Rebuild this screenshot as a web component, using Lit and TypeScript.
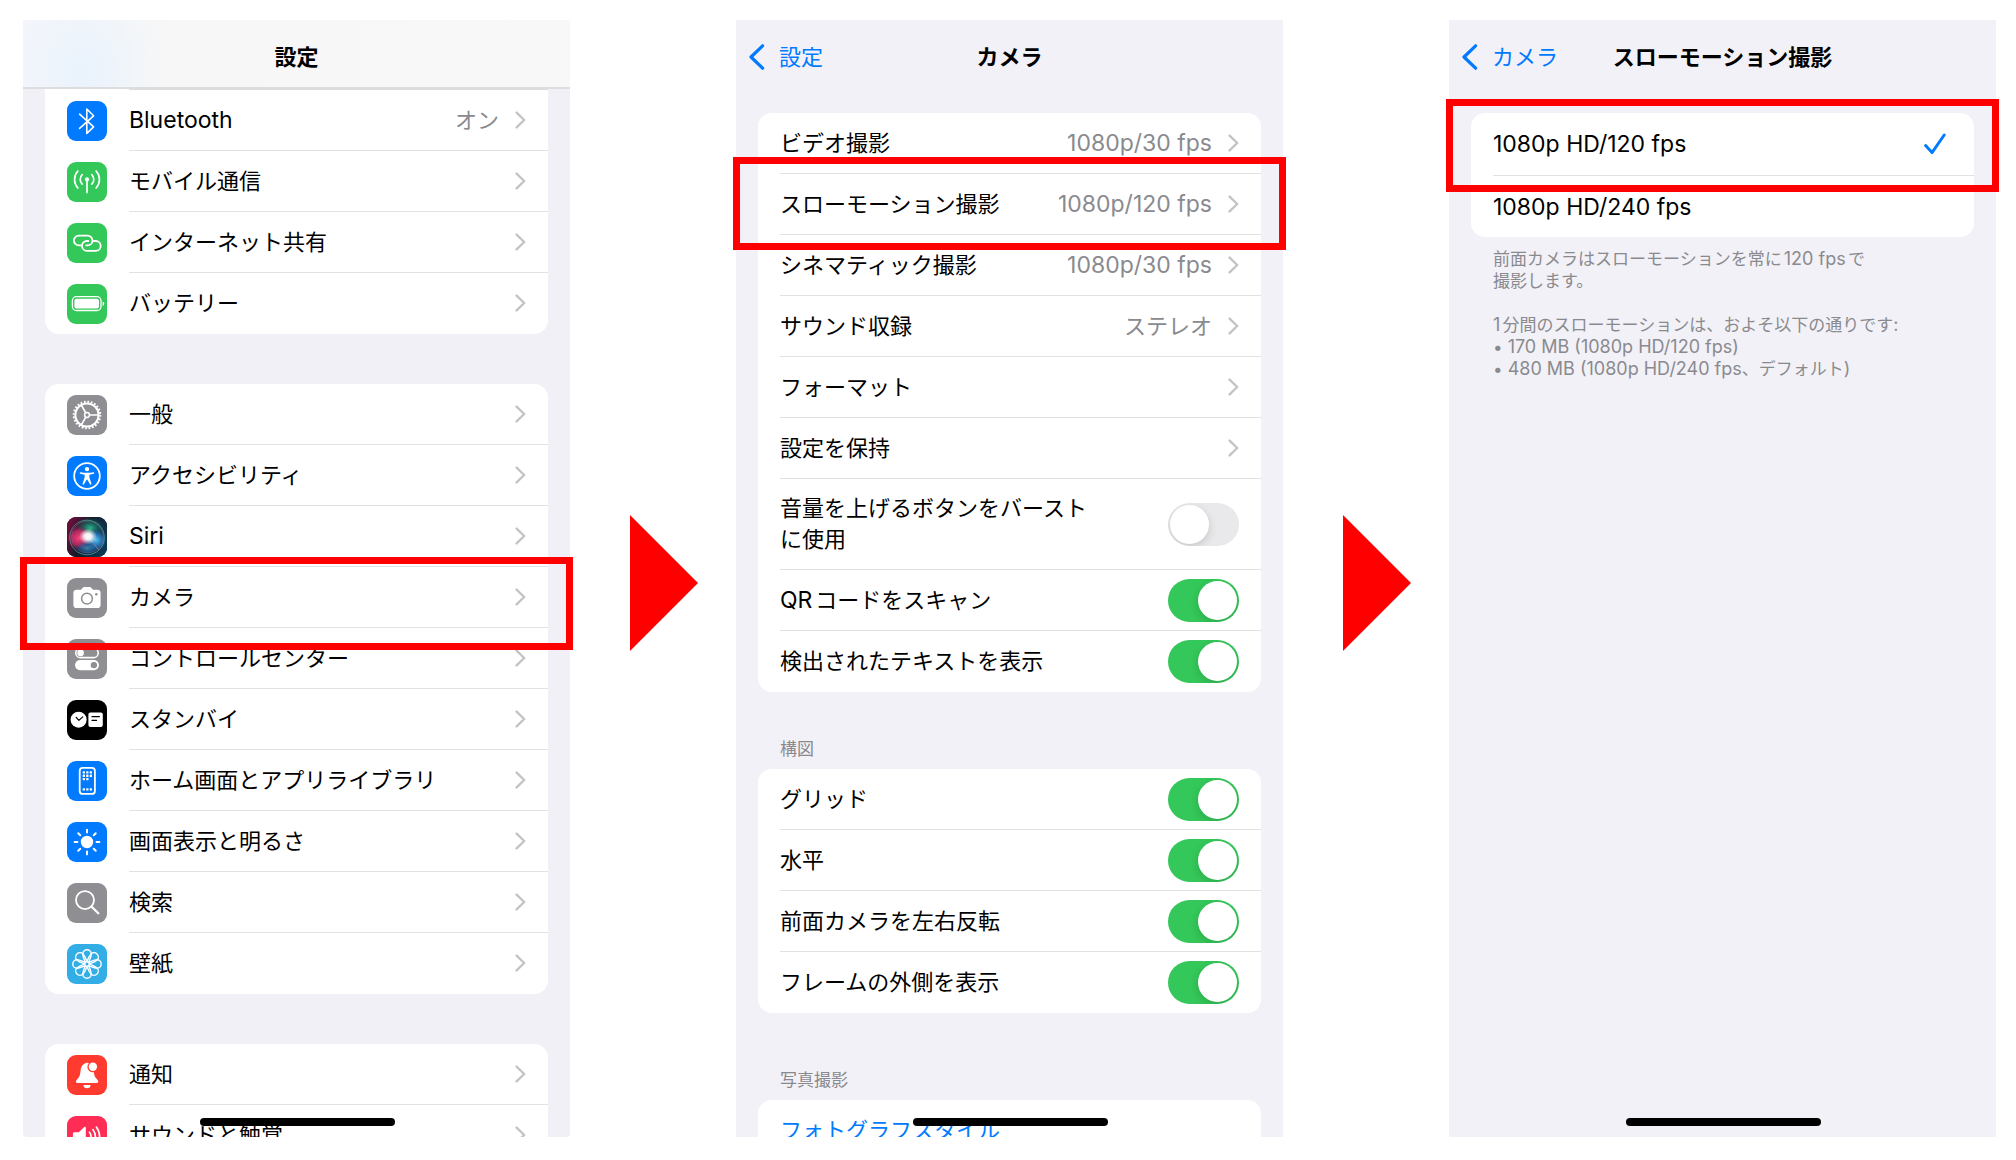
import { LitElement, html, svg, css, nothing, TemplateResult, SVGTemplateResult } from "lit";
import { customElement, property } from "lit/decorators.js";
import { classMap } from "lit/directives/class-map.js";

const shared = css`
  :host {
    display: block;
    box-sizing: border-box;
  }
  *,
  *::before,
  *::after {
    box-sizing: border-box;
  }
  .latin {
    font-size: 23px;
  }
  .small .latin {
    font-size: 18px;
  }
`;

/** Wraps runs of Latin letters and digits so they sit optically level with kana and kanji. */
const mixed = (text: string): unknown[] =>
  text
    .split(/([\x20-\x7e]+)/)
    .filter((part) => part !== "")
    .map((part) => (/^[\x20-\x7e]+$/.test(part) ? html`<span class="latin">${part}</span>` : part));

const range = (n: number): number[] => Array.from({ length: n }, (_, i) => i);

interface IconDef {
  background: string;
  glyph: SVGTemplateResult;
}

const line = "fill:none;stroke:#fff;stroke-linecap:round;stroke-linejoin:round";

const ICONS: Record<string, IconDef> = {
  bluetooth: {
    background: "#007aff",
    glyph: svg`<path style=${line} stroke-width="1.6" d="M12.6 13.2 26.6 25.9 19.8 32.4V8l6.8 6.8L12.6 27.4"/>`,
  },
  cellular: {
    background: "#34c759",
    glyph: svg`<g style=${line} stroke-width="1.7">
      <path d="M20 18v12.6M15.2 12.6a6.8 6.8 0 0 0 0 9.6M24.8 12.6a6.8 6.8 0 0 1 0 9.6M10.9 9a12.5 12.5 0 0 0 0 17M29.1 9a12.5 12.5 0 0 1 0 17"/>
    </g><circle cx="20" cy="17.4" r="2.1" fill="#fff"/>`,
  },
  hotspot: {
    background: "#34c759",
    glyph: svg`<g style=${line} stroke-width="1.8">
      <path d="M13.6 22.4h-1.8a4.9 4.9 0 0 1 0-9.8h8.8a4.9 4.9 0 0 1 0 9.8h-1.4"/>
      <path d="M26.8 18h2a4.9 4.9 0 0 1 0 9.8h-8.9a4.9 4.9 0 0 1 0-9.8h1.4"/>
    </g>`,
  },
  battery: {
    background: "#34c759",
    glyph: svg`<rect x="5.4" y="12.7" width="28.6" height="13.8" rx="4" fill="none" stroke="#fff" stroke-width="1.3"/>
      <rect x="7.4" y="14.7" width="24.6" height="9.8" rx="2.2" fill="#fff"/>
      <path d="M35.6 17.4a2.4 2.4 0 0 1 0 4.6z" fill="#fff"/>`,
  },
  general: {
    background: "#8e8e93",
    glyph: svg`<g fill="none" stroke="#fff">
      <circle cx="20" cy="20" r="13.3" stroke-width="2" stroke-dasharray="1.74 1.74"/>
      <circle cx="20" cy="20" r="11.6" stroke-width="2"/>
      <circle cx="20" cy="20" r="2.4" stroke-width="1.5"/>
      <path stroke-width="1.7" d="M22.4 20h9.2M18.8 17.9l-4.6-8M18.8 22.1l-4.6 8"/>
    </g>`,
  },
  accessibility: {
    background: "#007aff",
    glyph: svg`<circle cx="20" cy="20" r="12.8" fill="none" stroke="#fff" stroke-width="1.8"/>
      <circle cx="20" cy="13.1" r="2.2" fill="#fff"/>
      <path fill="#fff" d="M13.6 16.2c2.2.4 4.2.6 6.4.6s4.2-.2 6.4-.6c1.1-.1 1.3 1.3.2 1.6l-4.1.9c-.3.9-.2 2.5.2 3.7l1.7 5.2c.3 1.1-1.1 1.5-1.5.5L20.2 23.500h-.4L17.1 28.1c-.5 1-1.8.6-1.5-.5l1.700-5.200c.4-1.200.5-2.800.2-3.700l-4.100-.9c-1.100-.3-.9-1.700.2-1.600z"/>`,
  },
  siri: {
    background: "#0d1220",
    glyph: svg`<defs>
        <linearGradient id="siriBase" x1="0" y1="0.3" x2="1" y2="0.7">
          <stop offset="0" stop-color="#6a0f3a"/><stop offset="0.42" stop-color="#16192a"/><stop offset="1" stop-color="#0b3a56"/>
        </linearGradient>
        <radialGradient id="siriGreen"><stop offset="0" stop-color="#2bb58e"/><stop offset="1" stop-color="#13705f" stop-opacity="0"/></radialGradient>
        <radialGradient id="siriPink"><stop offset="0" stop-color="#f5447c"/><stop offset="0.6" stop-color="#c52a63" stop-opacity="0.85"/><stop offset="1" stop-color="#8b1950" stop-opacity="0"/></radialGradient>
        <radialGradient id="siriBlue"><stop offset="0" stop-color="#54c4f5"/><stop offset="0.6" stop-color="#2271b8" stop-opacity="0.8"/><stop offset="1" stop-color="#1a4e90" stop-opacity="0"/></radialGradient>
        <radialGradient id="siriCore"><stop offset="0" stop-color="#fff"/><stop offset="0.4" stop-color="#fff" stop-opacity="0.9"/><stop offset="1" stop-color="#fff" stop-opacity="0"/></radialGradient>
      </defs>
      <rect width="40" height="40" fill="url(#siriBase)"/>
      <ellipse cx="23" cy="11" rx="15" ry="11" fill="url(#siriGreen)"/>
      <circle cx="12" cy="21" r="12" fill="url(#siriPink)"/>
      <circle cx="29" cy="23" r="11" fill="url(#siriBlue)"/>
      <ellipse cx="20" cy="31" rx="12" ry="7" fill="url(#siriBlue)" opacity="0.6"/>
      <circle cx="20" cy="20.5" r="17.3" fill="none" stroke="#57b9a8" stroke-opacity="0.7" stroke-width="0.9"/>
      <circle cx="20.5" cy="20" r="15.9" fill="none" stroke="#a980b4" stroke-opacity="0.45" stroke-width="0.7"/>
      <path d="M21 20l11 13" stroke="#c89a86" stroke-opacity="0.6" stroke-width="1"/>
      <ellipse cx="21" cy="19.5" rx="9" ry="8" fill="url(#siriCore)"/>`,
  },
  camera: {
    background: "#8e8e93",
    glyph: svg`<path fill="#fff" d="M9.6 11.8h3.6c.8 0 1.2-.3 1.7-1l.6-.8c.5-.6 1-.9 1.8-.9h5.4c.8 0 1.3.3 1.8.9l.6.8c.5.7.9 1 1.7 1h3.6c2 0 3.2 1.1 3.2 3.1V27c0 2-1.2 3.1-3.2 3.1H9.6c-2 0-3.2-1.1-3.2-3.1V14.9c0-2 1.2-3.1 3.2-3.1z"/>
      <circle cx="20" cy="20.6" r="5.4" fill="none" stroke="#8e8e93" stroke-width="1.5"/>
      <circle cx="29.3" cy="16.2" r="1.2" fill="#8e8e93"/>`,
  },
  control: {
    background: "#8e8e93",
    glyph: svg`<rect x="8.8" y="9.2" width="22.4" height="9.4" rx="4.7" fill="none" stroke="#fff" stroke-width="1.6"/>
      <circle cx="13.6" cy="13.9" r="3.3" fill="#fff"/>
      <rect x="8" y="21" width="24" height="10.2" rx="5.1" fill="#fff"/>
      <circle cx="26.9" cy="26.1" r="3.2" fill="#8e8e93"/>`,
  },
  standby: {
    background: "#000000",
    glyph: svg`<circle cx="11.6" cy="19.7" r="8" fill="#fff"/>
      <path d="M9.2 17.4l2.7 3 3.8-3.5" fill="none" stroke="#000" stroke-width="1.2" stroke-linecap="round" stroke-linejoin="round"/>
      <rect x="21.4" y="12.4" width="14.4" height="14.6" rx="2" fill="#fff"/>
      <path d="M25 16.7h7.4M25 20.3h4.6" stroke="#000" stroke-width="1.2" stroke-linecap="round"/>`,
  },
  home: {
    background: "#007aff",
    glyph: svg`<rect x="12.7" y="6.9" width="15.2" height="26" rx="3" fill="none" stroke="#fff" stroke-width="1.8"/>
      ${[
        [0, 0], [1, 0], [2, 0], [0, 1], [1, 1], [2, 1], [0, 2], [1, 2], [0, 5], [1, 5], [2, 5],
      ].map(
        ([cx, cy]) =>
          svg`<rect x=${15.7 + cx * 3.5} y=${10.2 + cy * 3.4} width="2.3" height="2.3" rx="0.5" fill="#fff"/>`
      )}`,
  },
  display: {
    background: "#007aff",
    glyph: svg`<circle cx="20" cy="20" r="6.2" fill="#fff"/>
      ${range(8).map(
        (i) =>
          svg`<path d="M20 7.6v2.9" transform="rotate(${i * 45} 20 20)" stroke="#fff" stroke-width="1.9" stroke-linecap="round"/>`
      )}`,
  },
  search: {
    background: "#8e8e93",
    glyph: svg`<circle cx="18" cy="17.1" r="9" fill="none" stroke="#fff" stroke-width="1.8"/>
      <path d="M24.6 23.7l6.7 6.6" stroke="#fff" stroke-width="2.3" stroke-linecap="round"/>`,
  },
  wallpaper: {
    background: "#32ade6",
    glyph: svg`<g fill="none" stroke="#fff" stroke-width="1.4">
      ${range(8).map(
        (i) =>
          svg`<path transform="rotate(${i * 45} 20 20)" d="M21.8 18.2c.8-2.6 2.4-4.900 2.400-8.200a4.200 4.200 0 0 0-8.400 0c0 3.300 1.600 5.600 2.400 8.200"/>`
      )}
      <circle cx="20" cy="20" r="2.2"/></g>`,
  },
  notifications: {
    background: "#ff3b30",
    glyph: svg`<path fill="#fff" d="M20 7.7c-3.9.6-6 3.7-6.4 7.7-.4 4.3-1.1 6.5-3.2 8.7-.8.9-1.4 1.7-1.4 2.5 0 1 .7 1.5 1.9 1.5h18.4c1.2 0 1.9-.5 1.9-1.5 0-.8-.6-1.6-1.4-2.5-2.1-2.2-2.8-4.4-3.2-8.7-.4-4-2.5-7.1-6.6-7.700z"/>
      <circle cx="25.9" cy="11.8" r="5.5" fill="#ff3b30"/>
      <circle cx="25.9" cy="11.8" r="4.2" fill="#fff"/>
      <path d="M16.5 30.1h7a3.5 3.2 0 0 1-7 0z" fill="#fff"/>`,
  },
  sounds: {
    background: "#ff2d55",
    glyph: svg`<path fill="#fff" d="M7.5 16.2h4.3l5.2-5c.8-.7 1.8-.3 1.8.8v17c0 1.1-1 1.5-1.8.8l-5.2-5H7.5c-1 0-1.6-.6-1.6-1.6v-5.400c0-1 .6-1.600 1.600-1.600z"/>
      <path style=${line} stroke-width="1.7" d="M22.5 16.3a7 7 0 0 1 0 8.4M26 13.7a11 11 0 0 1 0 13.6M29.5 11.2a15.5 15.5 0 0 1 0 18.6"/>`,
  },
};

const chevron = html`<svg class="chevron" viewBox="0 0 11 18" width="11" height="18" aria-hidden="true">
  <path d="M1.6 1.6 9.2 9l-7.6 7.4" fill="none" stroke="#c4c4c7" stroke-width="2.4" stroke-linecap="round" stroke-linejoin="round"/>
</svg>`;

@customElement("setting-row")
export class SettingRow extends LitElement {
  @property() icon = "";
  @property() label = "";
  @property() value = "";
  @property({ type: Boolean }) last = false;

  static styles = [
    shared,
    css`
      .row {
        display: flex;
        align-items: stretch;
        gap: 22px;
        min-height: 61px;
        padding-left: 22px;
        color: inherit;
        text-decoration: none;
      }
      .icon {
        align-self: center;
        flex: none;
        width: 40px;
        height: 40px;
        border-radius: 9px;
      }
      .body {
        flex: 1;
        display: flex;
        align-items: center;
        gap: 16px;
        padding-right: 22px;
        border-bottom: 1px solid #e2e2e5;
        line-height: 30px;
      }
      .last {
        border-bottom-color: transparent;
      }
      .label {
        flex: 1;
      }
      .value {
        color: #8a8a8e;
      }
      .chevron {
        flex: none;
      }
    `,
  ];

  render() {
    const icon = ICONS[this.icon];
    return html`<a class="row" href="#${this.icon || "detail"}">
      ${icon
        ? html`<svg class="icon" viewBox="0 0 40 40" aria-hidden="true">
            <rect width="40" height="40" fill=${icon.background}/>${icon.glyph}
          </svg>`
        : nothing}
      <span class=${classMap({ body: true, last: this.last })}>
        <span class="label">${mixed(this.label)}</span>
        ${this.value ? html`<span class="value">${mixed(this.value)}</span>` : nothing} ${chevron}
      </span>
    </a>`;
  }
}

@customElement("switch-row")
export class SwitchRow extends LitElement {
  @property({ attribute: false }) lines: string[] = [];
  @property({ type: Boolean }) on = false;
  @property({ type: Boolean }) last = false;

  static styles = [
    shared,
    css`
      .row {
        display: flex;
        padding-left: 22px;
      }
      .body {
        flex: 1;
        display: flex;
        align-items: center;
        justify-content: space-between;
        min-height: 61px;
        padding: 14px 22px 14px 0;
        border-bottom: 1px solid #e2e2e5;
      }
      .single {
        padding-top: 0;
        padding-bottom: 0;
      }
      .last {
        border-bottom-color: transparent;
      }
      .text {
        line-height: 31px;
      }
      .switch {
        appearance: none;
        flex: none;
        display: flex;
        overflow: hidden;
        width: 71px;
        height: 43px;
        margin: 0;
        padding: 2px;
        border-radius: 22px;
        background: #e9e9eb;
      }
      .switch::before {
        content: "";
        width: 39px;
        height: 39px;
        border-radius: 50%;
        background: #fff;
        box-shadow: 0 3px 8px rgba(0, 0, 0, 0.15);
      }
      .switch:checked {
        justify-content: flex-end;
        background: #34c759;
      }
    `,
  ];

  render() {
    return html`<div class="row">
      <div class=${classMap({ body: true, single: this.lines.length === 1, last: this.last })}>
        <label class="text" for="toggle"
          >${this.lines.map((text, i) => html`${i ? html`<br />` : nothing}${mixed(text)}`)}</label
        >
        <input class="switch" id="toggle" type="checkbox" role="switch" .checked=${this.on} />
      </div>
    </div>`;
  }
}

@customElement("phone-screen")
export class PhoneScreen extends LitElement {
  @property() heading = "";
  @property() back = "";
  @property({ type: Boolean }) frosted = false;

  static styles = [
    shared,
    css`
      :host {
        min-width: 0;
        min-height: 0;
        position: relative;
      }
      .screen {
        height: 100%;
        display: flex;
        flex-direction: column;
        overflow: hidden;
        background: #f2f1f7;
      }
      .scrolled {
        background: #f1f0f6;
        border-radius: 0 0 4px 4px;
      }
      .bar {
        flex: none;
        display: grid;
        grid-template-columns: 1fr auto 1fr;
        align-items: center;
        height: 93px;
        padding: 0 13px 19px;
      }
      .frosted {
        height: 69px;
        padding-bottom: 0;
        padding-top: 6px;
        border-bottom: 2px solid #dddddf;
        background: radial-gradient(ellipse 80px 100px at 60px 50px, #e9f2fc, rgba(233, 242, 252, 0)),
          linear-gradient(90deg, #f5f6fa, #f7f7f7 30%, #f8f8f8);
      }
      .title {
        grid-column: 2;
        margin: 0;
        font-size: 22px;
        font-weight: 600;
        line-height: 30px;
      }
      .back {
        grid-column: 1;
        justify-self: start;
        display: flex;
        align-items: center;
        gap: 14px;
        color: #007aff;
        text-decoration: none;
        line-height: 30px;
      }
      .content {
        flex: 1;
        min-height: 0;
        padding: 0 22px;
      }
      .indicator {
        position: absolute;
        left: 50%;
        bottom: 11px;
        width: 195px;
        height: 8px;
        margin-left: -97px;
        border-radius: 4px;
        background: #000;
      }
    `,
  ];

  render() {
    return html`<div class=${classMap({ screen: true, scrolled: this.frosted })}>
        <header class=${classMap({ bar: true, frosted: this.frosted })}>
          ${this.back
            ? html`<a class="back" href="#back">
                <svg viewBox="0 0 16 26" width="16" height="26" aria-hidden="true">
                  <path d="M13.6 1.8 2 13l11.6 11.2" fill="none" stroke="#007aff" stroke-width="3.2" stroke-linecap="round" stroke-linejoin="round"/>
                </svg>
                <span>${this.back}</span>
              </a>`
            : nothing}
          <h2 class="title">${this.heading}</h2>
        </header>
        <div class="content"><slot></slot></div>
      </div>
      <div class="indicator"></div>
      <slot name="mark"></slot>`;
  }
}

interface Item {
  icon?: string;
  label: string;
  value?: string;
}

const CONNECTIVITY: Item[] = [
  { icon: "bluetooth", label: "Bluetooth", value: "オン" },
  { icon: "cellular", label: "モバイル通信" },
  { icon: "hotspot", label: "インターネット共有" },
  { icon: "battery", label: "バッテリー" },
];

const DEVICE: Item[] = [
  { icon: "general", label: "一般" },
  { icon: "accessibility", label: "アクセシビリティ" },
  { icon: "siri", label: "Siri" },
  { icon: "camera", label: "カメラ" },
  { icon: "control", label: "コントロールセンター" },
  { icon: "standby", label: "スタンバイ" },
  { icon: "home", label: "ホーム画面とアプリライブラリ" },
  { icon: "display", label: "画面表示と明るさ" },
  { icon: "search", label: "検索" },
  { icon: "wallpaper", label: "壁紙" },
];

const ALERTS: Item[] = [
  { icon: "notifications", label: "通知" },
  { icon: "sounds", label: "サウンドと触覚" },
];

const CAPTURE: Item[] = [
  { label: "ビデオ撮影", value: "1080p/30 fps" },
  { label: "スローモーション撮影", value: "1080p/120 fps" },
  { label: "シネマティック撮影", value: "1080p/30 fps" },
  { label: "サウンド収録", value: "ステレオ" },
  { label: "フォーマット" },
  { label: "設定を保持" },
];

const COMPOSITION = ["グリッド", "水平", "前面カメラを左右反転", "フレームの外側を表示"];

const RATES = ["1080p HD/120 fps", "1080p HD/240 fps"];

@customElement("app-root")
export class AppRoot extends LitElement {
  static styles = [
    shared,
    css`
      :host {
        font-family: Inter, "Noto Sans CJK JP", sans-serif;
        font-size: 22px;
        line-height: 30px;
        color: #000;
        text-autospace: normal;
      }
      .stage {
        display: grid;
        grid-template-columns: 1fr 166px 1fr 166px 1fr;
        height: 100vh;
        padding: 20px 20px 23px 23px;
        background: #fff;
      }
      .step {
        display: flex;
        align-items: center;
        padding: 9px 0 0 60px;
      }
      .card {
        overflow: hidden;
        border-radius: 14px;
        background: #fff;
      }
      .card + .card {
        margin-top: 50px;
      }
      .continued {
        border-radius: 0 0 14px 14px;
      }
      .sliver {
        height: 1px;
        margin-left: 84px;
        background: #dcdcdf;
      }
      .section {
        margin: 0;
        padding: 46px 22px 9px;
        font-size: 17px;
        font-weight: 400;
        line-height: 22px;
        color: #8a8a8e;
      }
      .wide {
        padding-top: 56px;
      }
      .link {
        display: block;
        padding: 15px 22px;
        color: #007aff;
        text-decoration: none;
      }
      .option {
        display: flex;
        align-items: center;
        min-height: 62px;
        margin-left: 22px;
        padding-right: 28px;
      }
      .option + .option {
        border-top: 1px solid #e2e2e5;
      }
      .option span {
        flex: 1;
      }
      .radio {
        appearance: none;
        width: 0;
        height: 0;
        margin: 0;
      }
      .check {
        visibility: hidden;
      }
      .radio:checked + .check {
        visibility: visible;
      }
      .options {
        margin: 0;
        padding: 0;
        border: 0;
      }
      .notes {
        padding: 11px 22px;
        font-size: 17px;
        line-height: 22px;
        color: #8a8a8e;
      }
      .notes p {
        margin: 0 0 22px;
      }
      .mark {
        position: absolute;
        left: -3px;
        right: -3px;
        height: 93px;
        border: 7px solid #ff0000;
        pointer-events: none;
      }
      .mark-camera {
        top: 537px;
      }
      .mark-slow {
        top: 137px;
      }
      .mark-rate {
        top: 79px;
      }
    `,
  ];

  private rows(items: Item[], open = false): TemplateResult[] {
    return items.map(
      (item, i) => html`<setting-row
        .icon=${item.icon ?? ""}
        .label=${item.label}
        .value=${item.value ?? ""}
        .last=${!open && i === items.length - 1}
      ></setting-row>`
    );
  }

  private arrow(): TemplateResult {
    return html`<div class="step">
      <svg viewBox="0 0 68 136" width="68" height="136" aria-hidden="true"><path d="M0 0 68 68 0 136z" fill="#ff0000"/></svg>
    </div>`;
  }

  render() {
    return html`<main class="stage">
      <phone-screen heading="設定" frosted>
        <div class="card continued"><div class="sliver"></div>${this.rows(CONNECTIVITY)}</div>
        <div class="card">${this.rows(DEVICE)}</div>
        <div class="card">${this.rows(ALERTS)}</div>
        <div class="mark mark-camera" slot="mark"></div>
      </phone-screen>
      ${this.arrow()}
      <phone-screen heading="カメラ" back="設定">
        <div class="card">
          ${this.rows(CAPTURE, true)}
          <switch-row .lines=${["音量を上げるボタンをバースト", "に使用"]}></switch-row>
          <switch-row .lines=${["QRコードをスキャン"]} on></switch-row>
          <switch-row .lines=${["検出されたテキストを表示"]} on last></switch-row>
        </div>
        <h3 class="section">構図</h3>
        <div class="card">
          ${COMPOSITION.map(
            (label, i) =>
              html`<switch-row .lines=${[label]} on .last=${i === COMPOSITION.length - 1}></switch-row>`
          )}
        </div>
        <h3 class="section wide">写真撮影</h3>
        <div class="card"><a class="link" href="#styles">フォトグラフスタイル</a></div>
        <div class="mark mark-slow" slot="mark"></div>
      </phone-screen>
      ${this.arrow()}
      <phone-screen heading="スローモーション撮影" back="カメラ">
        <fieldset class="card options" aria-label="スローモーション撮影">
          ${RATES.map(
            (rate, i) => html`<label class="option">
              <span class="latin">${rate}</span>
              <input class="radio" type="radio" name="rate" .checked=${i === 0} />
              <svg class="check" viewBox="0 0 22 22" width="22" height="22" aria-hidden="true">
                <path d="M1.6 12.6 8 19.6 20.2 2" fill="none" stroke="#007aff" stroke-width="2.9" stroke-linecap="round" stroke-linejoin="round"/>
              </svg>
            </label>`
          )}
        </fieldset>
        <div class="notes small">
          <p>${mixed("前面カメラはスローモーションを常に120 fpsで")}<br />撮影します。</p>
          <p>
            ${mixed("1分間のスローモーションは、およそ以下の通りです:")}<br />
            ${mixed("• 170 MB (1080p HD/120 fps)")}<br />
            ${mixed("• 480 MB (1080p HD/240 fps、デフォルト)")}
          </p>
        </div>
        <div class="mark mark-rate" slot="mark"></div>
      </phone-screen>
    </main>`;
  }
}
